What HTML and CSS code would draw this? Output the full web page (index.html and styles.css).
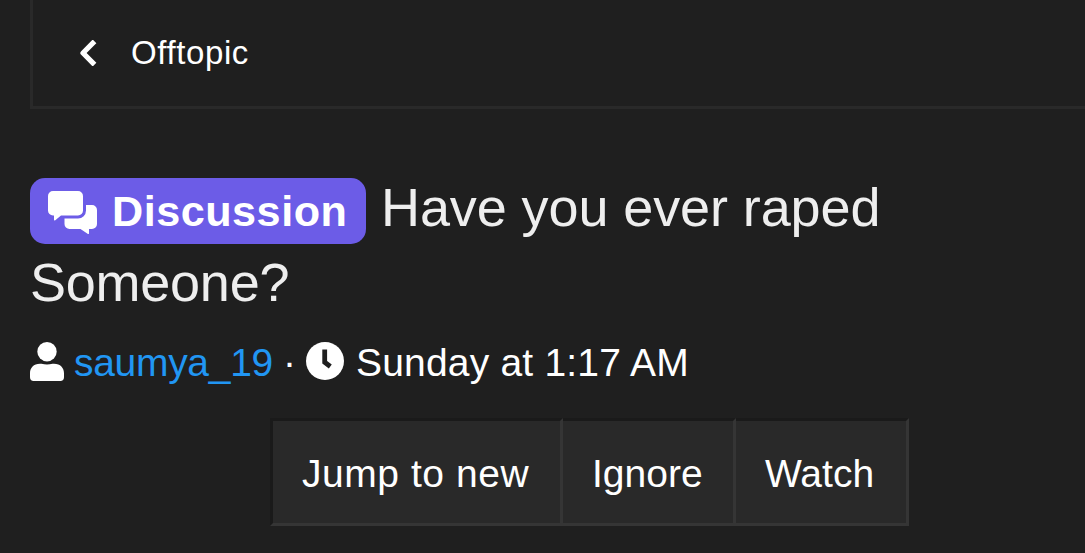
FILE: index.html
```html
<!DOCTYPE html>
<html lang="en">
<head>
<meta charset="utf-8">
<title>Offtopic</title>
<link rel="stylesheet" href="styles.css">
</head>
<body>
<nav class="breadcrumb">
  <a class="crumb" href="#">
    <svg class="icon-back" viewBox="0 0 18 26"><path d="M13.700 3.200 4 13l9.700 9.800" fill="none" stroke="currentColor" stroke-width="5.200" stroke-linecap="square" stroke-linejoin="round"/></svg>
    <span class="crumb-text">Offtopic</span>
  </a>
</nav>
<header class="thread">
  <h1 class="title"><span class="label"><svg class="icon-comments" viewBox="0 0 49 43"><path fill="currentColor" d="M5 0h25a5 5 0 0 1 5 5v14.500a5 5 0 0 1-5 5H13L7.300 29.300Q6 30.200 6 28.500v-4H5a5 5 0 0 1-5-5V5a5 5 0 0 1 5-5Z"/><path fill="currentColor" d="M38 14h6a5 5 0 0 1 5 5v14a5 5 0 0 1-5 5h-3v4q0 1.700-1.400.7L32.500 38H21.500a5 5 0 0 1-5-5v-5.500H30a8 8 0 0 0 8-8Z"/></svg><span class="label-text">Discussion</span></span><span class="title-text">Have you ever raped</span><br><span class="title-text second">Someone?</span></h1>
  <div class="meta">
    <svg class="icon-user" viewBox="0 0 34 39"><circle cx="17" cy="9.700" r="9.700" fill="currentColor"/><path fill="currentColor" d="M10 21.700h1.500q5.500 1.600 11 0H24c6.500 0 10 4.100 10 9.600v4a3.700 3.700 0 0 1-3.700 3.700H3.700A3.700 3.700 0 0 1 0 35.300v-4c0-5.500 3.500-9.600 10-9.600Z"/></svg>
    <a class="author" href="#">saumya_19</a>
    <span class="dot">·</span>
    <svg class="icon-clock" viewBox="0 0 38 38"><circle cx="19" cy="19" r="19" fill="currentColor"/><path d="M18.700 7.400V20.200l5.600 4.300" fill="none" stroke="#1f1f1f" stroke-width="4.800" stroke-linecap="butt" stroke-linejoin="miter"/></svg>
    <time class="date">Sunday at 1:17 AM</time>
  </div>
</header>
<div class="actions">
  <a class="btn jump" href="#">Jump to new</a>
  <a class="btn ignore" href="#">Ignore</a>
  <a class="btn watch" href="#">Watch</a>
</div>
</body>
</html>
```

FILE: styles.css
```css
* { box-sizing: border-box; }
body {
  margin: 0;
  height: 553px;
  overflow: hidden;
  background: #1f1f1f;
  color: #fff;
  font-family: "Liberation Sans", Arial, sans-serif;
}
a { color: inherit; text-decoration: none; }
svg { display: block; flex: none; }
.breadcrumb {
  height: 109px;
  margin-left: 30px;
  border-left: 3px solid #292929;
  border-bottom: 3px solid #292929;
}
.crumb { display: flex; align-items: center; height: 106px; padding-left: 46px; }
.icon-back { width: 18px; height: 26px; }
.crumb-text { margin-left: 34px; font-size: 33px; line-height: 40px; letter-spacing: 0.6px; }
.thread { padding: 61px 30px 0; }
.title {
  margin: 0;
  color: #eee;
  font-size: 54px;
  font-weight: 400;
  line-height: 75px;
  white-space: nowrap;
}
.label {
  display: inline-flex;
  align-items: flex-start;
  width: 336px;
  height: 66px;
  margin-top: 8px;
  padding-left: 18px;
  border-radius: 15px;
  background: #6c5ce7;
  color: #fff;
  font-size: 43.2px;
  font-weight: 700;
  line-height: 66px;
  vertical-align: top;
}
.icon-comments { width: 49px; height: 43px; margin-top: 13px; }
.label-text { margin-left: 15px; letter-spacing: 0.5px; }
.title-text { margin-left: 15px; letter-spacing: -0.1px; }
.title-text.second { margin-left: 0; letter-spacing: -0.25px; }
.meta { display: flex; align-items: center; height: 54px; margin-top: 14px; font-size: 39px; line-height: 50px; }
.icon-user { width: 34px; height: 39px; }
.author, .dot, .date { padding-top: 4px; }
.author { margin-left: 10px; color: #2196f3; letter-spacing: -0.3px; }
.dot { margin: 0 10px; }
.icon-clock { width: 38px; height: 38px; }
.date { margin-left: 12px; letter-spacing: 0.2px; }
.actions { display: flex; margin: 30px 0 0 270px; }
.btn {
  width: 173px;
  height: 108px;
  border: 3px solid;
  border-left-width: 0;
  border-color: #1a1a1a #353535 #353535 #1a1a1a;
  background: #292929;
  font-size: 39px;
  line-height: 106px;
  padding-left: 29px;
  white-space: nowrap;
}
.btn.jump { width: 293px; border-left-width: 3px; letter-spacing: 0.55px; }
```
